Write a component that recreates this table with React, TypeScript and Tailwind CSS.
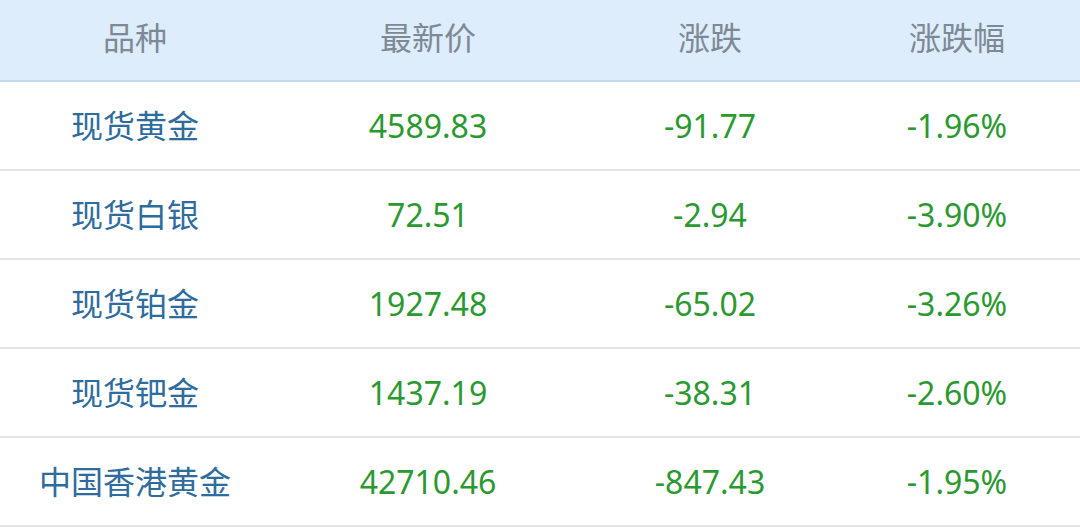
const rows = [
  { name: '现货黄金', price: '4589.83', change: '-91.77', pct: '-1.96%' },
  { name: '现货白银', price: '72.51', change: '-2.94', pct: '-3.90%' },
  { name: '现货铂金', price: '1927.48', change: '-65.02', pct: '-3.26%' },
  { name: '现货钯金', price: '1437.19', change: '-38.31', pct: '-2.60%' },
  { name: '中国香港黄金', price: '42710.46', change: '-847.43', pct: '-1.95%' },
];

const cols = 'grid grid-cols-[270px_316px_248px_246px]';

export default function App() {
  return (
    <div
      className="w-[1080px] h-[528px] bg-white overflow-hidden text-[32px]"
      style={{ fontFamily: '"Noto Sans", "Noto Sans CJK SC", sans-serif' }}
    >
      {/* 表头 */}
      <div className={`${cols} h-[82px] bg-[#ddedfc] border-b-2 border-[#c3d9ee] text-[#7e8995]`}>
        <div className="flex items-center justify-center pb-1">品种</div>
        <div className="flex items-center justify-center pb-1">最新价</div>
        <div className="flex items-center justify-center pb-1">涨跌</div>
        <div className="flex items-center justify-center pb-1">涨跌幅</div>
      </div>

      {rows.map((r) => (
        <div key={r.name} className={`${cols} h-[89px] border-b-2 border-[#e4e4e4]`}>
          <div className="flex items-center justify-center text-[#2e6c9e]">{r.name}</div>
          <div className="flex items-center justify-center text-[#2a9a30]">{r.price}</div>
          <div className="flex items-center justify-center text-[#2a9a30]">{r.change}</div>
          <div className="flex items-center justify-center text-[#2a9a30]">{r.pct}</div>
        </div>
      ))}
    </div>
  );
}
